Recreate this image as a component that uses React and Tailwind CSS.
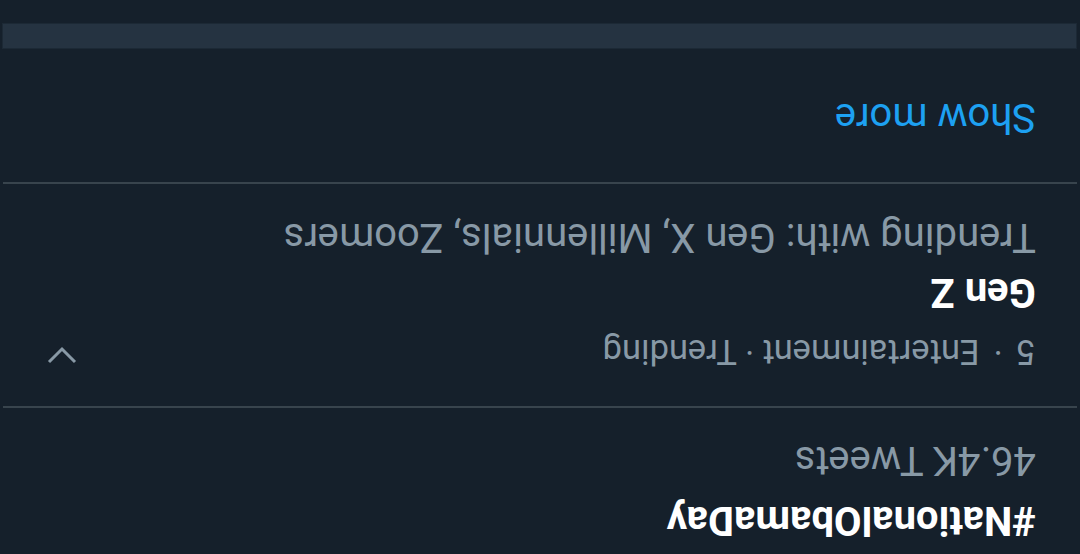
const Divider = () => <div className="mx-[3px] h-[2px] bg-[#38444d]" />;

const App = () => {
  return (
    <div className="w-[1080px] h-[554px] overflow-hidden rotate-180 bg-[#15202b] font-['Roboto',sans-serif]">
      <div className="h-[146px] pl-[44px] pt-[11px]">
        <p className="text-[40px] leading-[46px] font-bold text-white">#NationalObamaDay</p>
        <p className="mt-[14px] text-[40px] leading-[46px] text-[#8899a6]">46.4K Tweets</p>
      </div>
      <Divider />
      <div className="h-[222px] pl-[44px] pr-[47px] pt-[34px]">
        <div className="flex items-start justify-between">
          <p className="text-[34.5px] leading-[40px] text-[#8899a6]">
            5<span className="mx-[14px]">·</span>Entertainment · Trending
          </p>
          <svg width="30" height="18" viewBox="0 0 30 18" className="mt-[8px]">
            <path d="M2 2 L15 15 L28 2" fill="none" stroke="#8899a6" strokeWidth="3" />
          </svg>
        </div>
        <p className="mt-[17px] text-[40px] leading-[46px] font-bold text-white">Gen Z</p>
        <p className="mt-[9px] text-[40px] leading-[46px] text-[#8899a6]">
          Trending with: Gen X, Millennials, Zoomers
        </p>
      </div>
      <Divider />
      <div className="h-[133px] pl-[44px] pt-[42px]">
        <p className="text-[40px] leading-[46px] text-[#1da1f2]">Show more</p>
      </div>
      <div className="ml-[3px] mr-[2px] h-[26px] border border-[#1c2935] bg-[#253341]" />
    </div>
  );
};

export default App;
